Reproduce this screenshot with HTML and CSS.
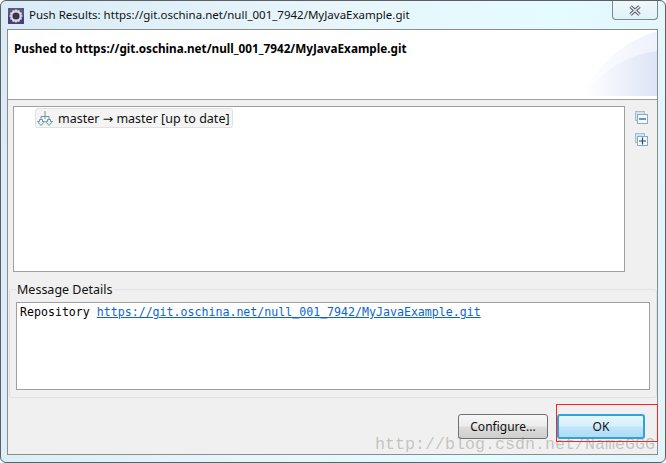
FILE: index.html
```html
<!DOCTYPE html>
<html lang="en">
<head>
<meta charset="utf-8">
<title>Push Results</title>
<link rel="stylesheet" href="styles.css">
</head>
<body>
<div class="window">
  <div class="titlebar">
    <svg class="app-icon" width="16" height="16" viewBox="0 0 16 16">
      <rect width="16" height="16" fill="#4a3f7c"/>
      <path d="M0 0h16v7H0z" fill="#5d5780"/>
      <path d="M8 1l1.300 1.600 2-.5.6 2 2 .6-.5 2L15 8l-1.600 1.300.5 2-2 .6-.6 2-2-.5L8 15l-1.300-1.600-2 .5-.6-2-2-.6.5-2L1 8l1.600-1.300-.5-2 2-.6.6-2 2 .5z" fill="#d9d9de"/>
      <circle cx="8" cy="8" r="3.600" fill="#3a3550"/>
    </svg>
    <span class="title-text">Push Results: https://git.oschina.net/null_001_7942/MyJavaExample.git</span>
    <div class="close-btn">
      <svg width="12" height="11" viewBox="0 0 12 11">
        <path d="M1.500 1.500l9 8M10.500 1.500l-9 8" stroke="#555a66" stroke-width="3.400"/>
        <path d="M1.500 1.500l9 8M10.500 1.500l-9 8" stroke="#f2f4f6" stroke-width="1.200"/>
      </svg>
    </div>
  </div>
  <div class="client">
    <header class="banner">
      <h1 class="banner-title">Pushed to https://git.oschina.net/null_001_7942/MyJavaExample.git</h1>
      <svg class="banner-art" width="75" height="66" viewBox="0 0 75 66">
        <defs>
          <linearGradient id="art" x1="0" y1="0" x2="1" y2="0">
            <stop offset="0" stop-color="#fff"/>
            <stop offset="1" stop-color="#dde4f7"/>
          </linearGradient>
        </defs>
        <path d="M0 66C14 36 40 12 75 1v65z" fill="url(#art)" opacity=".5"/>
        <path d="M2 66C20 40 45 25 75 21v45z" fill="url(#art)"/>
      </svg>
    </header>
    <div class="content">
      <div class="tree-row">
        <div class="tree">
          <div class="node">
            <svg width="16" height="17" viewBox="0 0 16 17" fill="none" stroke="#6e9aa6">
              <path d="M8 1v8M4 9V6.500h8V9" stroke="#7c8f98"/>
              <path d="M2.500 9.500h3v2h2l-3.500 4-3.500-4h2zM10.500 9.500h3v2h2l-3.500 4-3.500-4h2z" fill="#e3f2f5"/>
            </svg>
            <span>master <span class="arrow">→</span> master [up to date]</span>
          </div>
        </div>
        <div class="tree-tools">
          <svg width="13" height="13" viewBox="0 0 13 13">
            <rect x=".5" y=".5" width="9" height="9" fill="#cfe2f1" stroke="#a5bdd2"/>
            <rect x="2.500" y="3.500" width="10" height="9" fill="#f4f8fb" stroke="#8fa7bf"/>
            <path d="M4 8h7" stroke="#17507f" stroke-width="1.200"/>
          </svg>
          <svg width="13" height="13" viewBox="0 0 13 13">
            <rect x=".5" y=".5" width="9" height="9" fill="#cfe2f1" stroke="#a5bdd2"/>
            <rect x="2.500" y="3.500" width="10" height="9" fill="#f4f8fb" stroke="#8fa7bf"/>
            <path d="M4 8h7M7.500 4.500v7" stroke="#17507f" stroke-width="1.200"/>
          </svg>
        </div>
      </div>
      <fieldset class="details">
        <legend class="details-label">Message Details</legend>
        <div class="message">Repository <a class="repo-link" href="#">https://git.oschina.net/null_001_7942/MyJavaExample.git</a></div>
      </fieldset>
      <div class="actions">
        <button class="btn" type="button">Configure...</button>
        <button class="btn btn-ok" type="button">OK</button>
      </div>
    </div>
  </div>
  <div class="highlight"></div>
  <div class="watermark">http://blog.csdn.net/NameGGG</div>
</div>
</body>
</html>
```
FILE: styles.css
```css
* { box-sizing: border-box; }
html, body { margin: 0; padding: 0; }
body { width: 666px; height: 463px; overflow: hidden; background: #fff; font-family: "Noto Sans", "Open Sans", sans-serif; }
.window {
  position: relative;
  width: 666px;
  height: 463px;
  display: flex;
  flex-direction: column;
  padding: 0 7px 7px 6px;
  border: 1px solid #5c5f63;
  border-radius: 6px 6px 6px 6px;
  background: linear-gradient(100deg, #d9ebf6 0%, #e8f6fb 45%, #e4fbff 75%, #e2f3fa 100%);
}
.titlebar { display: flex; align-items: flex-start; height: 28px; flex: none; }
.app-icon { margin: 7px 0 0 1px; flex: none; }
.title-text { margin: 5px 0 0 5px; font-size: 11.500px; line-height: 18px; color: #111; white-space: nowrap; }
.close-btn {
  margin-left: auto;
  width: 46px;
  height: 19px;
  display: flex;
  align-items: center;
  justify-content: center;
  background: linear-gradient(#f0f8fc, #dff2f9);
  border: 1px solid #7d8791;
  border-top: 0;
  border-radius: 0 0 4px 4px;
}
.client { flex: 1; display: flex; flex-direction: column; border: 1px solid #8a8d8f; background: #f0f0f0; min-height: 0; }
.banner { position: relative; height: 70px; flex: none; background: #fff; border-bottom: 1px solid #a0a0a0; overflow: hidden; }
.banner-title { margin: 0; padding: 9px 0 0 6px; font-size: 11.730px; line-height: 18px; font-weight: 700; color: #000; white-space: nowrap; }
.banner-art { position: absolute; right: 0; bottom: 3px; }
.content { flex: 1; display: flex; flex-direction: column; padding: 6px 7px 0 5px; min-height: 0; }
.tree-row { display: flex; gap: 10px; height: 166px; flex: none; }
.tree { width: 612px; background: #fff; border: 1px solid #a0a0a0; padding: 1px 21px; flex: none; }
.node {
  display: inline-flex;
  align-items: center;
  gap: 5px;
  height: 20px;
  padding: 0 2px 0 1px;
  font-size: 12.500px;
  color: #111;
  background: #f4f4f4;
  border: 1px solid #e2e2e2;
  border-radius: 3px;
}
.arrow { font-family: "DejaVu Sans", sans-serif; }
.tree-tools { display: flex; flex-direction: column; gap: 9px; padding-top: 5px; }
.details {
  margin: 9px -7px 0 -4px;
  padding: 0 6px 6px 6px;
  height: 117px;
  border: 1px solid #dce4ea;
  border-radius: 3px;
  min-width: 0;
  flex: none;
}
.details-label { padding: 0 1px; margin: 0; font-size: 12.500px; line-height: 17px; color: #111; }
.message {
  height: 88px;
  margin-top: 4px;
  padding: 1px 3px 0;
  background: #fff;
  border: 1px solid #a0a0a0;
  font-family: "DejaVu Sans Mono", monospace;
  font-size: 11.600px;
  line-height: 16px;
  color: #000;
  white-space: nowrap;
}
.repo-link { color: #0a66cc; text-decoration: underline; }
.actions { display: flex; justify-content: flex-end; gap: 9px; margin-top: 16px; padding-right: 5px; }
.btn {
  height: 25px;
  width: 90px;
  padding: 0;
  font-family: inherit;
  font-size: 12px;
  color: #111;
  border: 1px solid #707070;
  border-radius: 3px;
  background: linear-gradient(#f6f6f6 0%, #ececec 48%, #dcdcdc 52%, #cfcfcf 100%);
}
.btn-ok {
  width: 88px;
  border: 2px solid #2fa3e0;
  background: linear-gradient(#e6f6fe 0%, #d7effb 48%, #bfe5fa 52%, #aedcf7 100%);
}
.highlight { position: absolute; left: 555px; top: 403px; width: 102px; height: 38px; border: 1px solid #f22; }
.watermark {
  position: absolute;
  left: 374px;
  top: 434px;
  font-family: "Liberation Mono", monospace;
  font-size: 16.670px;
  line-height: 20px;
  color: rgba(120, 120, 110, .38);
  white-space: nowrap;
}
```
